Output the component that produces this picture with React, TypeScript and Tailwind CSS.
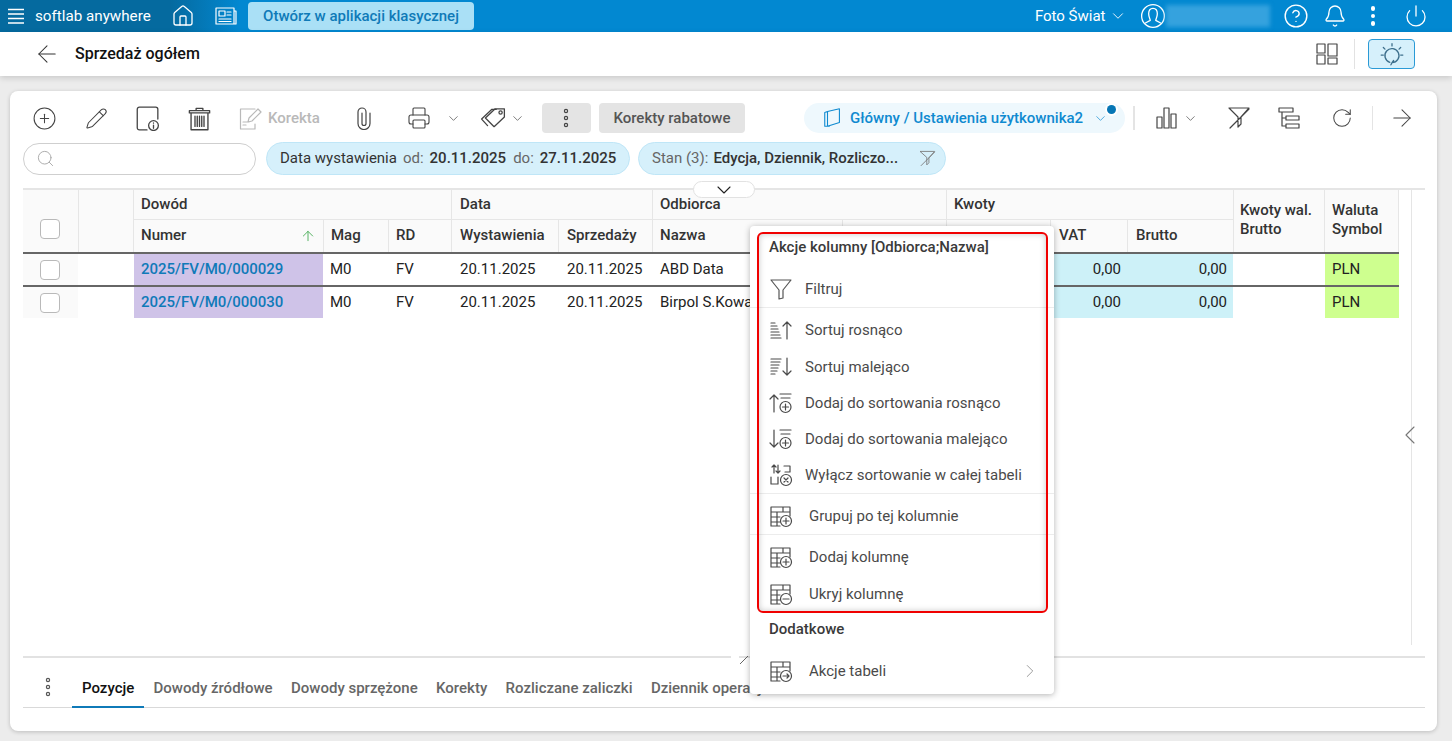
import { ChevronDown, ChevronLeft, ChevronRight, CirclePlus, House, Pencil, Printer, RotateCw, ArrowLeft, ArrowRight, ArrowUp, Bell, Power, CircleHelp, Search } from 'lucide-react';
import type { ReactNode } from 'react';

const COLS = 'grid-cols-[55px_55px_190px_65px_63px_107px_94px_190px_104px_104px_77px_106px_91px_75px]';

function Svg({ size = 24, children, className = '' }: { size?: number; children: ReactNode; className?: string }) {
  return (
    <svg width={size} height={size} viewBox="0 0 24 24" fill="none" stroke="currentColor" strokeWidth="1.2" strokeLinecap="round" strokeLinejoin="round" className={className}>
      {children}
    </svg>
  );
}

function Kebab({ className = '' }: { className?: string }) {
  return (
    <svg width="6" height="20" viewBox="0 0 6 20" fill="none" stroke="currentColor" strokeWidth="1.2" className={className}>
      <circle cx="3" cy="3" r="1.6" />
      <circle cx="3" cy="10" r="1.6" />
      <circle cx="3" cy="17" r="1.6" />
    </svg>
  );
}

function Hamburger() {
  return (
    <svg width="16" height="16" viewBox="0 0 16 16" stroke="currentColor" strokeWidth="1.3">
      <path d="M0 1.500h16M0 6h16M0 10.500h16M0 15h16" />
    </svg>
  );
}

function DocInfo() {
  return (
    <Svg size={26}>
      <path d="M12 23H5a2 2 0 0 1-2-2V4a2 2 0 0 1 2-2h15a2 2 0 0 1 2 2v9" />
      <circle cx="18" cy="19" r="4.500" />
      <path d="M18 18.500v3M18 16.500v.3" />
    </Svg>
  );
}

function Trash() {
  return (
    <Svg size={27}>
      <path d="M3 5h18v2H3zM9 5V3h6v2M4.500 7v15h15V7" />
      <path d="M8 10v9M10 10v9M12 10v9M14 10v9M16 10v9" />
    </Svg>
  );
}

function KorektaIcon() {
  return (
    <Svg size={24}>
      <path d="M17 3H2.500v20H17v-5" />
      <path d="M5 19h3M5 16h6M10 16l1-4L20 3l3 3-9 9z" />
    </Svg>
  );
}

function Clip() {
  return (
    <Svg size={24}>
      <path d="M18 7v10.500a6 6 0 0 1-12 0V6a4 4 0 0 1 8 0v11.500a2 2 0 0 1-4 0V7" />
    </Svg>
  );
}

function TagsIcon() {
  return (
    <Svg size={26}>
      <path d="M1.500 13 11 4h4M7 19l-5.500-6" />
      <path d="M5 12 14 3.500h8.500V11L13 20z" />
      <circle cx="19" cy="7" r="1.500" />
    </Svg>
  );
}

function ViewBox() {
  return (
    <Svg size={22}>
      <path d="M6 5 3 6v15h5M6 5l13-3v15L6 21z" />
    </Svg>
  );
}

function Bars() {
  return (
    <Svg size={24}>
      <path d="M2 11h5v11H2zM9 2h5v20H9zM16 8h5v14h-5z" />
    </Svg>
  );
}

function FilterOff({ size = 24 }: { size?: number }) {
  return (
    <Svg size={size}>
      <path d="M2 2h20l-8 9v7l-3 3v-10zM3 22 22 3" />
    </Svg>
  );
}

function TreeIcon() {
  return (
    <Svg size={24}>
      <path d="M2 2h14v4H2zM9 10h13v4H9zM9 18h13v4H9zM5 6v14h4M5 12h4" />
    </Svg>
  );
}

function LayoutIcon() {
  return (
    <Svg size={24}>
      <path d="M2 2h8v9H2zM2 13h8v9H2zM13 2h9v12h-9zM13 16h9v6h-9z" />
    </Svg>
  );
}

function Bulb() {
  return (
    <Svg size={26} className="text-[#3d6f8c]">
      <path d="M12 20a6.500 6.500 0 1 0-2-.3M12 20l-1 2M12 20l1.500-2M12 2.500v2M4 6l1.500 1.500M20 6l-1.500 1.500M2 13h2M20 13h2" />
    </Svg>
  );
}

function UserCircle() {
  return (
    <Svg size={26}>
      <circle cx="12" cy="12" r="10.500" />
      <path d="M8 10c0-3 1.500-5 4-5s4 2 4 5-1.500 5-1.500 6l4.500 2.500M8 10c0 3 1.500 5 1.500 6L5 18.500" />
    </Svg>
  );
}

function Article() {
  return (
    <Svg size={24}>
      <path d="M2 4h18v16H2zM20 7h2v13h-2M5 7h6v5H5zM13 8h4M13 11h4M5 15h12M5 17.500h12" />
    </Svg>
  );
}

function SortAsc() {
  return (
    <Svg size={24}>
      <path d="M2 5h4M2 8h6M2 11h7M2 14h8M2 17h9M2 20h10M18 21V4m-4 4 4-4 4 4" />
    </Svg>
  );
}

function SortDesc() {
  return (
    <Svg size={24}>
      <path d="M2 4h10M2 7h9M2 10h8M2 13h7M2 16h6M2 19h4M18 3v17m-4-4 4 4 4-4" />
    </Svg>
  );
}

function SortAdd({ down }: { down?: boolean }) {
  return (
    <Svg size={24}>
      <path d={down ? 'M5 3v17m-4-4 4 4 4-4' : 'M5 21V4M1 8l4-4 4 4'} />
      <path d="M11 3h11M12 7h9" />
      <circle cx="16.500" cy="16" r="5.500" />
      <path d="M16.500 13v6M13.500 16h6" />
    </Svg>
  );
}

function SortOff() {
  return (
    <Svg size={24}>
      <path d="M5 2v8M3 4l2-2 2 2M9 10V2M7 8l2 2 2-2M15 3h6v6h-5M2 14v7h7v-7" />
      <circle cx="17" cy="17" r="5.500" />
      <path d="m15 15 4 4m0-4-4 4" />
    </Svg>
  );
}

function TableGlyph({ mark }: { mark: 'plus' | 'minus' | 'arrow' }) {
  return (
    <Svg size={24}>
      <path d="M11 22H2V3h19v9M2 8h19M2 13h9M2 18h9M8 8v14M14 3v5" />
      <circle cx="17" cy="17" r="5.500" />
      {mark === 'plus' && <path d="M17 14v6M14 17h6" />}
      {mark === 'minus' && <path d="M14 17h6" />}
      {mark === 'arrow' && <path d="M14 17h6m-2-2 2 2-2 2" />}
    </Svg>
  );
}

function Checkbox() {
  return <div className="w-5 h-5 rounded-[4px] border border-[#b9b9b9] bg-white" />;
}

function MenuItem({ icon, label, indent, children }: { icon: ReactNode; label: string; indent?: boolean; children?: ReactNode }) {
  return (
    <div className="flex items-center h-9 pl-[19px] pr-[15px] text-[#4a4a4a]">
      <span className={`flex items-center ${indent ? 'w-[40px]' : 'w-[36px]'} shrink-0`}>{icon}</span>
      <span className="flex-1 whitespace-nowrap">{label}</span>
      {children}
    </div>
  );
}

function HeadCell({ className = 'pl-[7px] pb-px', children }: { className?: string; children?: ReactNode }) {
  return <div className={`flex items-center pr-[7px] border-l border-[#e6e6e6] font-medium text-[#333] ${className}`}>{children}</div>;
}

function TableRow({ name, number }: { name: string; number: string }) {
  const cell = 'flex items-center pb-px';
  return (
    <div className={`grid ${COLS} h-[33px] border-t-2 border-[#666] text-[#222] items-stretch`}>
      <div className="flex items-center justify-center pr-px bg-[#fafafa]"><Checkbox /></div>
      <div />
      <div className={`${cell} ml-px pl-[7px] bg-[#cfc3e8] text-[#0f7ab8] font-medium`}>{number}</div>
      <div className={`${cell} pl-[7px]`}>M0</div>
      <div className={`${cell} pl-2`}>FV</div>
      <div className={`${cell} pl-[9px]`}>20.11.2025</div>
      <div className={`${cell} pl-[9px]`}>20.11.2025</div>
      <div className={`${cell} pl-2 whitespace-nowrap`}>{name}</div>
      <div />
      <div className="bg-[#cdf1f8]" />
      <div className={`${cell} justify-end pr-1.5 bg-[#cdf1f8]`}>0,00</div>
      <div className={`${cell} justify-end pr-1.5 bg-[#cdf1f8]`}>0,00</div>
      <div />
      <div className={`${cell} ml-px pl-[7px] bg-[#ceff8f]`}>PLN</div>
    </div>
  );
}

export default function App() {
  const tabs = ['Dowody źródłowe', 'Dowody sprzężone', 'Korekty', 'Rozliczane zaliczki', 'Dziennik operacji'];

  return (
    <div className="relative h-[741px] w-[1452px] overflow-hidden bg-[#ececec] text-[15px] flex flex-col font-['Roboto',sans-serif]">
      {/* top bar */}
      <header className="h-8 shrink-0 flex items-center text-white bg-[linear-gradient(90deg,#056a9f_0,#056a9f_170px,#0288d1_240px)]">
        <span className="ml-[8px]"><Hamburger /></span>
        <span className="ml-[11px] w-[115px] text-[15.200px] whitespace-nowrap">softlab anywhere</span>
        <House size={24} strokeWidth={1.3} className="ml-[21px]" />
        <span className="ml-[19px]"><Article /></span>
        <button className="ml-[10px] h-7 w-[226px] rounded bg-[#aae0f6] text-[#0f7ab8] font-medium">Otwórz w aplikacji klasycznej</button>
        <div className="ml-auto flex items-center">
          <span>Foto Świat</span>
          <ChevronDown size={18} strokeWidth={1.2} className="ml-[3px]" />
          <span className="ml-[13px]"><UserCircle /></span>
          <div className="w-[104px] h-[22px] bg-[#35a2de] blur-[2px]" />
          <CircleHelp size={26} strokeWidth={1.3} className="ml-[13px]" />
          <Bell size={24} strokeWidth={1.3} className="ml-[14px]" />
          <span className="ml-[24px] flex flex-col gap-[3px]">
            <i className="w-[4.500px] h-[4.500px] rounded-full bg-white" />
            <i className="w-[4.500px] h-[4.500px] rounded-full bg-white" />
            <i className="w-[4.500px] h-[4.500px] rounded-full bg-white" />
          </span>
          <Power size={24} strokeWidth={1.3} className="ml-[29px] mr-6" />
        </div>
      </header>

      {/* page title */}
      <div className="h-11 shrink-0 bg-white flex items-center shadow-[0_2px_6px_rgba(0,0,0,0.15)] relative">
        <ArrowLeft size={28} strokeWidth={0.9} className="ml-[33px] text-[#333]" />
        <h1 className="ml-[14px] text-base font-medium text-[#111]">Sprzedaż ogółem</h1>
        <div className="ml-auto flex items-center text-[#444]">
          <LayoutIcon />
          <div className="w-px h-[30px] bg-[#e2e2e2] ml-[15px] mr-[13px]" />
          <div className="w-[47px] h-[30px] mr-[37px] flex items-center justify-center rounded bg-[#d6f0fb] border border-[#2a9ad6]"><Bulb /></div>
        </div>
      </div>

      {/* card */}
      <main className="relative ml-[10px] mt-[15px] w-[1427px] h-[640px] rounded-lg bg-white shadow-[0_1px_4px_rgba(0,0,0,0.2)] pl-[13px] pr-3 pt-3 flex flex-col">
        <div className="h-[30px] flex items-center text-[#444] shrink-0">
          <span className="w-[42px] flex justify-center"><CirclePlus size={25} strokeWidth={1} /></span>
          <span className="ml-[10px] w-[42px] flex justify-center"><Pencil size={23} strokeWidth={1.1} /></span>
          <span className="ml-[9px] w-[42px] flex justify-center"><DocInfo /></span>
          <span className="ml-[10px] w-[42px] flex justify-center"><Trash /></span>
          <span className="ml-[18px] flex items-center gap-[6px] text-[#b9b9b9] font-medium"><KorektaIcon />Korekta</span>
          <span className="ml-[32px]"><Clip /></span>
          <span className="ml-[31px]"><Printer size={24} strokeWidth={1.1} /></span>
          <ChevronDown size={15} strokeWidth={1.1} className="ml-[15px]" />
          <span className="ml-[19px]"><TagsIcon /></span>
          <ChevronDown size={15} strokeWidth={1.1} className="ml-[4px]" />
          <span className="ml-[17px] w-[49px] h-[30px] rounded bg-[#e4e4e4] flex items-center justify-center"><Kebab /></span>
          <span className="ml-2 w-[146px] h-[30px] rounded bg-[#e4e4e4] flex items-center justify-center font-medium text-[#555]">Korekty rabatowe</span>

          <div className="ml-auto flex items-center">
            <div className="relative w-[321px] h-[30px] rounded-full bg-[#eef8fd] flex items-center pl-[18px] text-[#0f8ad0] font-medium">
              <ViewBox />
              <span className="ml-[6px] whitespace-nowrap">Główny / Ustawienia użytkownika2</span>
              <ChevronDown size={15} strokeWidth={1.1} className="ml-[10px]" />
              <i className="absolute right-[9px] top-[2px] w-[9px] h-[9px] rounded-full bg-[#0676b5] ring-2 ring-white" />
            </div>
            <div className="w-0.5 h-6 bg-[#e4e4e4] ml-2" />
            <span className="ml-[20px]"><Bars /></span>
            <ChevronDown size={15} strokeWidth={1.1} className="ml-[4px]" />
            <span className="ml-[29px]"><FilterOff /></span>
            <span className="ml-[26px]"><TreeIcon /></span>
            <RotateCw size={22} strokeWidth={1.1} className="ml-[30px]" />
            <div className="w-px h-6 bg-[#e4e4e4] ml-[19px]" />
            <ArrowRight size={28} strokeWidth={0.9} className="ml-[15px] mr-[9px]" />
          </div>
        </div>

        <div className="mt-[9px] h-[33px] flex items-center gap-2.5 shrink-0">
          <div className="w-[233px] h-[32px] rounded-full border border-[#cfcfcf] flex items-center pl-3 text-[#aaa]">
            <Search size={19} strokeWidth={1.2} />
          </div>
          <div className="w-[364px] h-[33px] rounded-full bg-[#d6f0fb] border border-[#bfe6f7] flex items-center pl-[13px] text-[#333]">
            <span>Data wystawienia</span>
            <span className="ml-[6px] text-[#666]">od:</span>
            <b className="ml-[6px] font-medium">20.11.2025</b>
            <span className="ml-[7px] text-[#666]">do:</span>
            <b className="ml-[6px] font-medium">27.11.2025</b>
          </div>
          <div className="-ml-0.5 w-[308px] h-[33px] rounded-full bg-[#d6f0fb] border border-[#bfe6f7] flex items-center pl-[13px] text-[#333]">
            <span className="text-[#666]">Stan (3):</span>
            <b className="ml-[5px] font-medium whitespace-nowrap">Edycja, Dziennik, Rozliczo...</b>
            <span className="ml-auto mr-[9px] text-[#777]"><FilterOff size={17} /></span>
          </div>
        </div>

        {/* table */}
        <section className="relative mt-[13px] border-t-2 border-[#e5e5e5] shrink-0">
          <div className="absolute z-10 left-[670px] -top-[9px] w-[62px] h-[17px] rounded-full bg-white border border-[#e2e2e2] flex items-center justify-center text-[#222]">
            <ChevronDown size={24} strokeWidth={1.1} />
          </div>
          <div className="w-[1389px] h-[455px] border-r border-[#e5e5e5] relative">
            <div className={`grid ${COLS} grid-rows-[30px_32px] w-[1376px] bg-[#fafafa]`}>
              <div className="row-span-2 flex items-center justify-center pr-px pt-[16px]"><Checkbox /></div>
              <HeadCell className="row-span-2" />
              <HeadCell className="col-span-3 border-b pl-[7px]">Dowód</HeadCell>
              <HeadCell className="col-span-2 border-b pl-2">Data</HeadCell>
              <HeadCell className="col-span-2 border-b pl-[7px]">Odbiorca</HeadCell>
              <HeadCell className="col-span-3 border-b pl-[7px]">Kwoty</HeadCell>
              <HeadCell className="row-span-2 !items-start pl-[6px] pt-[11px] leading-[19px] whitespace-nowrap">Kwoty wal.<br />Brutto</HeadCell>
              <HeadCell className="row-span-2 !items-start pl-[7px] pt-[11px] leading-[19px] border-r">Waluta<br />Symbol</HeadCell>
              <HeadCell className="justify-between pl-[7px] pb-px">Numer<ArrowUp size={16} strokeWidth={1.4} className="text-[#4cae5a]" /></HeadCell>
              <HeadCell>Mag</HeadCell>
              <HeadCell>RD</HeadCell>
              <HeadCell className="pl-2 pb-px">Wystawienia</HeadCell>
              <HeadCell className="pl-2 pb-px">Sprzedaży</HeadCell>
              <HeadCell>Nazwa</HeadCell>
              <HeadCell />
              <HeadCell />
              <HeadCell className="pl-2 pb-px">VAT</HeadCell>
              <HeadCell className="pl-2 pb-px">Brutto</HeadCell>
            </div>
            <div className="w-[1376px]">
              <TableRow name="ABD Data" number="2025/FV/M0/000029" />
              <TableRow name="Birpol S.Kowa" number="2025/FV/M0/000030" />
            </div>
            <span className="absolute -right-[15px] top-[229px] flex text-[#777]">
              <ChevronLeft size={32} strokeWidth={0.8} />
            </span>
          </div>
        </section>

        <div className="relative mt-[11px] h-0.5 bg-[#e2e2e2] shrink-0">
          <svg width="10" height="10" viewBox="0 0 10 10" stroke="#666" className="absolute left-[716px] -top-[1px]"><path d="M1 9 9 1" /></svg>
          <div className="absolute left-[708px] top-0 w-[8px] h-0.5 bg-white" />
        </div>

        {/* tabs */}
        <div className="mt-3 h-[38px] flex border-b border-[#d9d9d9] shrink-0 relative">
          <span className="w-[49px] flex items-center justify-center pb-[4px] text-[#555]"><Kebab /></span>
          <span className="px-2.5 -mb-px border-b-2 border-[#0f7ab8] flex items-center font-medium text-[#111]">Pozycje</span>
          {tabs.map((t) => (
            <span key={t} className="px-[9.200px] flex items-center font-medium text-[#666] whitespace-nowrap">{t}</span>
          ))}
        </div>
      </main>

      {/* column context menu */}
      <div className="absolute left-[750px] top-[226px] w-[304px] h-[468px] rounded bg-white shadow-[0_1px_6px_rgba(0,0,0,0.3)] pt-[11px]">
        <div className="h-5 pl-[19px] flex items-center font-medium text-[#3a3a3a] whitespace-nowrap">Akcje kolumny [Odbiorca;Nazwa]</div>
        <div className="mt-[14px]">
          <MenuItem icon={<Svg size={24} className="text-[#555]"><path d="M2 3h20l-8 10v8l-4 1v-9z" /></Svg>} label="Filtruj" />
        </div>
        <div className="h-px bg-[#ececec]" />
        <div className="mt-[4px]"><MenuItem icon={<SortAsc />} label="Sortuj rosnąco" /></div>
        <div className="mt-px"><MenuItem icon={<SortDesc />} label="Sortuj malejąco" /></div>
        <MenuItem icon={<SortAdd />} label="Dodaj do sortowania rosnąco" />
        <MenuItem icon={<SortAdd down />} label="Dodaj do sortowania malejąco" />
        <MenuItem icon={<SortOff />} label="Wyłącz sortowanie w całej tabeli" />
        <div className="h-px bg-[#ececec]" />
        <div className="mt-1"><MenuItem indent icon={<TableGlyph mark="plus" />} label="Grupuj po tej kolumnie" /></div>
        <div className="h-px bg-[#ececec]" />
        <div className="mt-1"><MenuItem indent icon={<TableGlyph mark="plus" />} label="Dodaj kolumnę" /></div>
        <div className="mt-px"><MenuItem indent icon={<TableGlyph mark="minus" />} label="Ukryj kolumnę" /></div>
        <div className="mt-[7px] h-5 pl-[19px] flex items-center font-medium text-[#3a3a3a]">Dodatkowe</div>
        <div className="mt-[14px]">
          <MenuItem indent icon={<TableGlyph mark="arrow" />} label="Akcje tabeli">
            <ChevronRight size={22} strokeWidth={0.9} className="text-[#888] -mr-[2px]" />
          </MenuItem>
        </div>
      </div>

      {/* red annotation */}
      <div className="absolute left-[757px] top-[232px] w-[291px] h-[381px] rounded-md border-2 border-[#f00000] shadow-[inset_0_0_6px_rgba(0,0,0,0.22)] pointer-events-none" />
    </div>
  );
}
